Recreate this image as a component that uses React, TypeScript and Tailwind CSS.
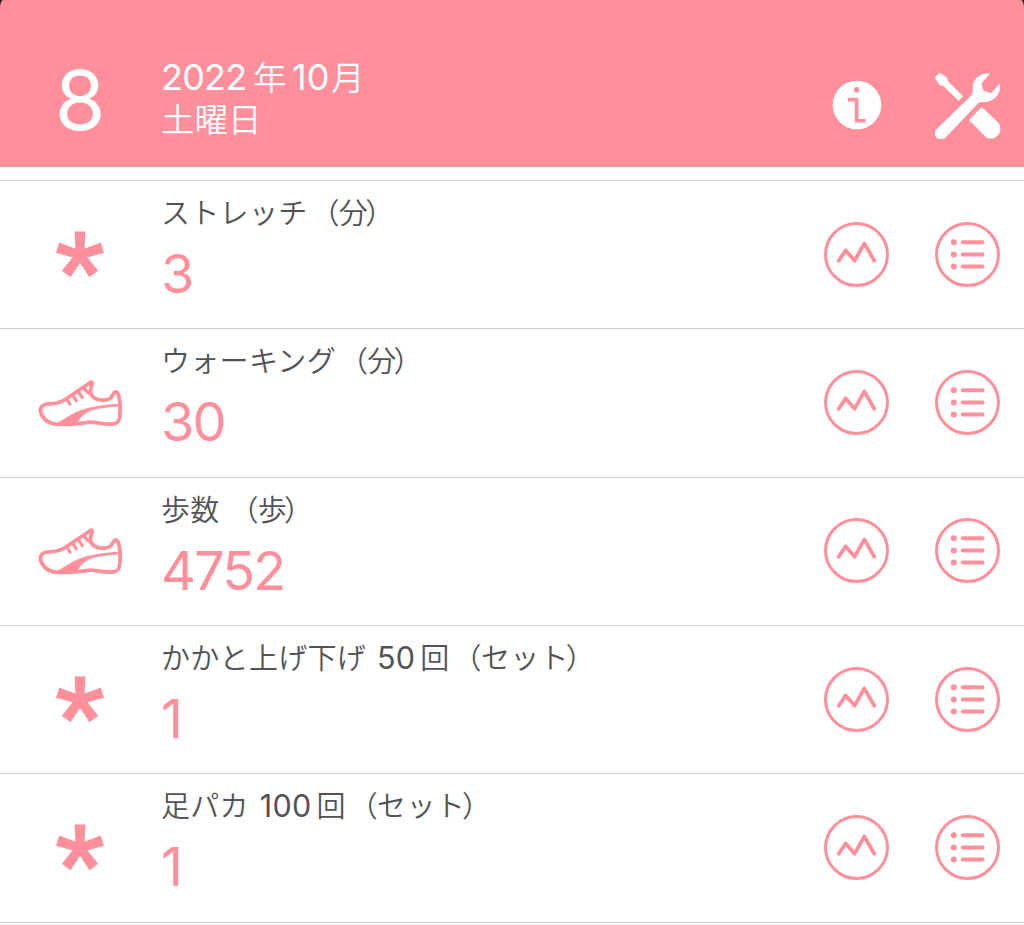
import type { ReactNode } from "react";

type IconKind = "asterisk" | "shoe";

interface Entry {
  icon: IconKind;
  name: ReactNode;
  unit: string;
  value: string;
}

function Num({ children }: { children: ReactNode }) {
  return <span className="mr-[5px] ml-[4px] font-['Inter'] text-[30.5px] font-normal">{children}</span>;
}

const entries: Entry[] = [
  { icon: "asterisk", name: "ストレッチ", unit: "分", value: "3" },
  { icon: "shoe", name: "ウォーキング", unit: "分", value: "30" },
  { icon: "shoe", name: "歩数 ", unit: "歩", value: "4752" },
  { icon: "asterisk", name: <>かかと上げ下げ <Num>50</Num>回</>, unit: "セット", value: "1" },
  { icon: "asterisk", name: <>足パカ <Num>100</Num>回</>, unit: "セット", value: "1" },
];

function AsteriskIcon() {
  return (
    <svg width="50" height="48" viewBox="-25 -22 50 48" fill="#ff909b">
      <circle cx="0" cy="2" r="5" />
      {[0, 72, 144, 216, 288].map((deg) => (
        <path key={deg} d="M-5.4-23.5H5.4L4.2 1H-4.2Z" transform={`translate(0 2) rotate(${deg})`} />
      ))}
    </svg>
  );
}

function ShoeIcon() {
  return (
    <svg width="86" height="48" viewBox="-1 0 86 48" fill="none" stroke="#ff909b" strokeWidth="3.8" strokeLinecap="round" strokeLinejoin="round">
      <path d="M10 24.8C17 25 23 23.5 28 20L45 8.5L53 3.2C55.5 3.5 53.5 7 52.7 9.5C52 13 53 16.5 56 18.8C60 21.8 68 22 72 19.5C75 17.5 75 13 77.8 13C81 13.5 81 17.5 81.5 21C82.6 27 82 31.5 81.8 37C81.5 42 79.5 44.5 75 45C66 46 59 43 51 43.2C43 44.5 37 45.3 30 45.3H20C13 45 7 42 4 36.5C1 31.5 2 25.5 10 24.8Z" />
      <path d="M28.7 20L32 25.2M34.7 16.5L38.2 21.7M40.5 13L44.3 18.5M46 9.5L50.5 14" strokeWidth="3.2" />
      <path d="M83 25C61 26.5 46 29 36 34.5C28 38.5 24 42.5 17 45H39C40 41 44 35.5 51 32C60 28.5 71 27.5 83 27Z" fill="#ff909b" strokeWidth="0.8" />
    </svg>
  );
}

function ChartIcon() {
  return (
    <svg width="66" height="66" viewBox="0 0 66 66" fill="none" stroke="#ff909b" strokeLinecap="round" strokeLinejoin="round">
      <circle cx="32.5" cy="32.5" r="31" strokeWidth="3" />
      <path d="M14.7 38.7L21.7 28.4L30.7 38.7L40.3 21.4L50.3 38.7" strokeWidth="3.8" />
    </svg>
  );
}

function ListIcon() {
  return (
    <svg width="66" height="66" viewBox="0 0 66 66" fill="none" stroke="#ff909b" strokeLinecap="round">
      <circle cx="32.5" cy="32.5" r="31" strokeWidth="3" />
      <path d="M27.7 20.2H47.6M27.7 32.4H47.6M27.7 44.6H47.6" strokeWidth="4" />
      <path d="M18.8 20.2H18.81M18.8 32.4H18.81M18.8 44.6H18.81" strokeWidth="6" />
    </svg>
  );
}

function InfoIcon() {
  return (
    <svg width="50" height="50" viewBox="0 0 50 50">
      <circle cx="25" cy="25" r="24.3" fill="#fff" />
      <circle cx="24.7" cy="9.8" r="2.8" fill="#ff909b" />
      <path d="M16 19.6H24.6V40.8H33.5" fill="none" stroke="#ff909b" strokeWidth="3.6" />
    </svg>
  );
}

function ToolsIcon() {
  return (
    <svg width="66" height="66" viewBox="0 0 66 66" fill="#fff">
      <path d="M55 .8C45-1 37 6.5 37.8 16C38 19.5 37.2 21.5 35.2 23.5L1.8 56C-1 59-.6 62.8 1.8 64.8C4.5 67 8.2 66.7 11 64L42 31.5C43.5 29.8 44.5 29 47 29.1C58.5 30 66.5 21.5 65 10.5L57 19C56 20 55 20.2 54 19.8L49.8 18.2C48.8 17.8 48.3 17.2 48 16.2L46.8 12.2C46.4 10.8 46.8 9.8 47.6 9Z" />
      <path d="M.3 3.8L4.2.4C5.2 0 6 .6 7 1.2L11.5 4.2C13.2 5.5 12.2 7.4 13.5 8.8L28 23.2L23.7 28L8.9 13.5C7.8 12.2 5.8 13.6 4.6 12L.8 6.2C.2 5.2-.1 4.6.3 3.8Z" />
      <path d="M46.7 34L62.5 48.8C66 52.5 66.3 57.5 63.5 61.5C60 66.5 54 67.2 50 63.3L34 47Z" />
    </svg>
  );
}

function EntryRow({ icon, name, unit, value }: Entry) {
  return (
    <li className="flex h-[148.35px] border-t border-[#cfcfcf]">
      <div className="flex w-[162px] shrink-0 items-center justify-center pr-0.5">
        {icon === "shoe" ? <ShoeIcon /> : <AsteriskIcon />}
      </div>
      <div className="flex-1 pt-[10px]">
        <p className="-ml-px h-10 text-[29px] leading-10 tracking-[0.3px] whitespace-pre text-[#535355]">
          {name}
          <span className="mr-[-1px] ml-[3px]">（</span>
          {unit}
          <span className="ml-[-3px]">）</span>
        </p>
        <p className="mt-[12px] -ml-px h-[62px] font-['Inter'] text-[54px] leading-[62px] font-normal tracking-[-1.8px] text-[#ff909b]">{value}</p>
      </div>
      <div className="flex shrink-0 items-center gap-[45px] pr-[23px]">
        <ChartIcon />
        <ListIcon />
      </div>
    </li>
  );
}

export default function App() {
  return (
    <div className="h-[925px] w-[1024px] overflow-hidden bg-white font-['Noto_Sans_CJK_JP',sans-serif] font-[350]">
      <div className="bg-black">
        <header className="flex h-[167px] rounded-t-[3px_8px] bg-[#ff909b] text-white">
          <div className="w-[162px] shrink-0 pt-[52px] pr-0.5 text-center font-['Inter'] text-[82px] leading-[98px] font-normal">8</div>
          <div className="flex-1 pt-[55px] text-[33.5px] leading-[42px]">
            <p className="-ml-px flex h-[42px] items-baseline">
              <span className="w-[92px] font-['Inter'] text-[36px] font-normal tracking-[-0.8px]">2022</span>
              <span className="w-[39px]">年</span>
              <span className="w-[39px] font-['Inter'] text-[36px] font-normal">10</span>
              <span>月</span>
            </p>
            <p className="-ml-px h-[42px]">土曜日</p>
          </div>
          <div className="flex shrink-0 items-start gap-[53px] pr-[23px]">
            <div className="pt-[80px]"><InfoIcon /></div>
            <div className="pt-[73px]"><ToolsIcon /></div>
          </div>
        </header>
      </div>
      <ul className="mt-[13px] border-b border-[#cfcfcf]">
        {entries.map((entry, i) => (
          <EntryRow key={i} {...entry} />
        ))}
      </ul>
    </div>
  );
}
